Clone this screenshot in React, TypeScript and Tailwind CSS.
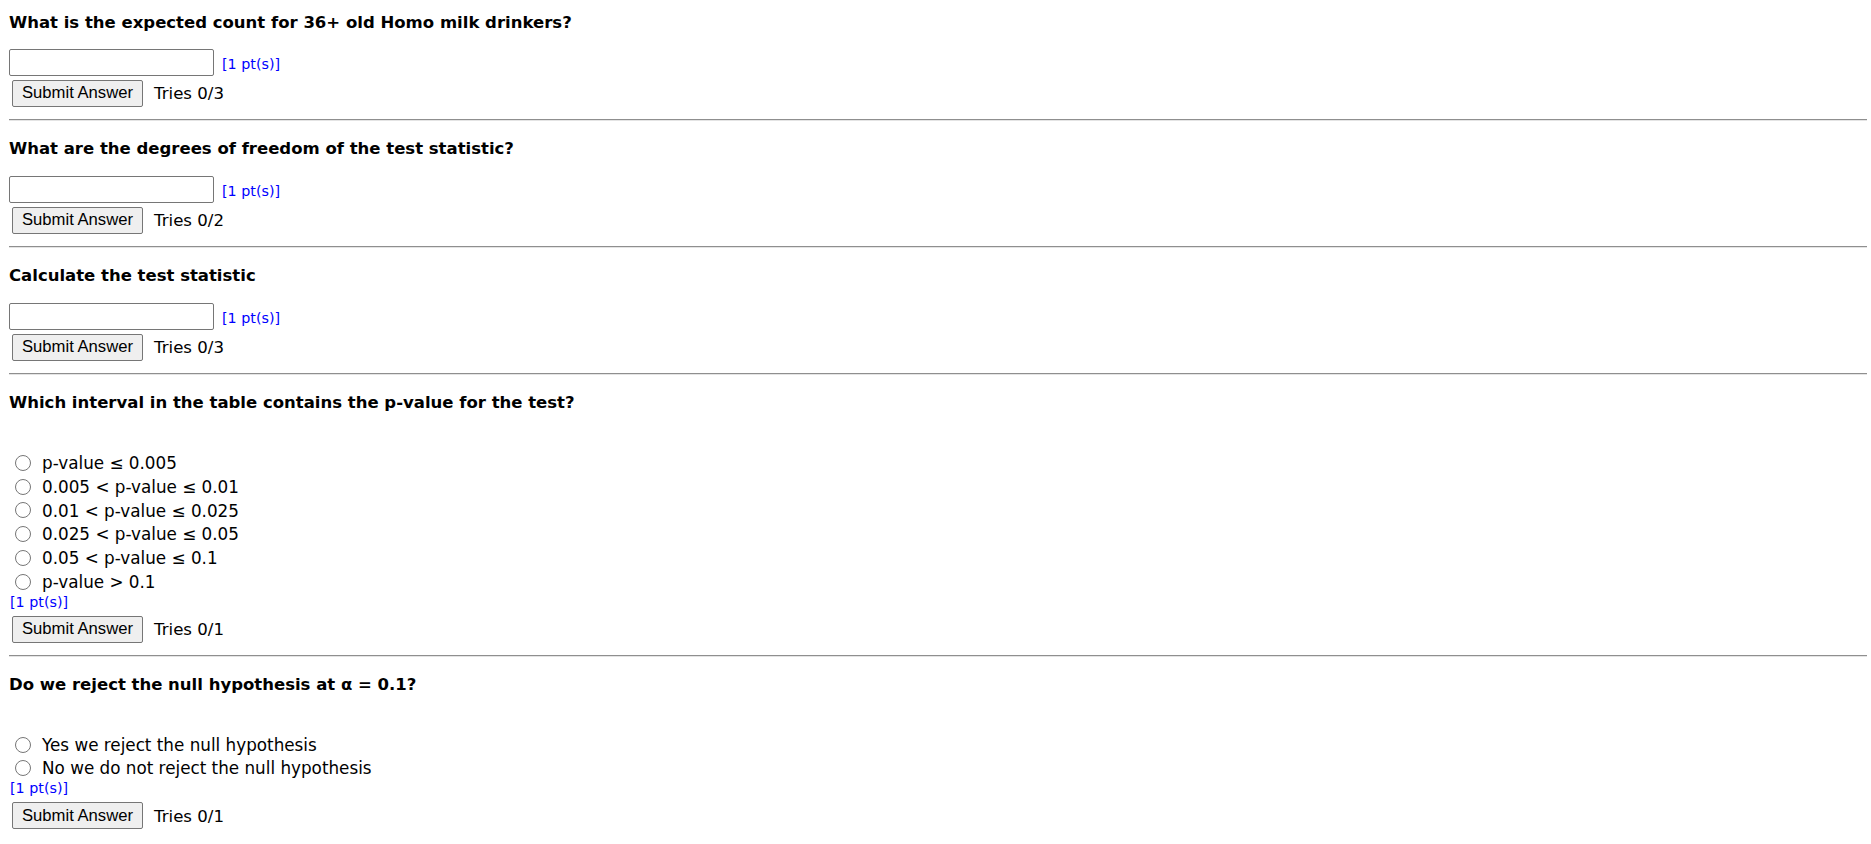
import React from "react";

type Question = {
  title: string;
  tries: string;
  options?: string[];
};

const QUESTIONS: Question[] = [
  { title: "What is the expected count for 36+ old Homo milk drinkers?", tries: "Tries 0/3" },
  { title: "What are the degrees of freedom of the test statistic?", tries: "Tries 0/2" },
  { title: "Calculate the test statistic", tries: "Tries 0/3" },
  {
    title: "Which interval in the table contains the p-value for the test?",
    tries: "Tries 0/1",
    options: [
      "p-value ≤ 0.005",
      "0.005 < p-value ≤ 0.01",
      "0.01 < p-value ≤ 0.025",
      "0.025 < p-value ≤ 0.05",
      "0.05 < p-value ≤ 0.1",
      "p-value > 0.1",
    ],
  },
  {
    title: "Do we reject the null hypothesis at α = 0.1?",
    tries: "Tries 0/1",
    options: ["Yes we reject the null hypothesis", "No we do not reject the null hypothesis"],
  },
];

const verdana = "font-['DejaVu_Sans',Verdana,sans-serif]";
const arial = "font-['Liberation_Sans',Arial,sans-serif]";

function Points() {
  return <span className={`${verdana} text-[14.3px] leading-[16px] text-[#0000ff]`}>[1 pt(s)]</span>;
}

function SubmitRow({ tries }: { tries: string }) {
  return (
    <div className="flex h-[27px] items-center">
      <button
        type="button"
        className={`${arial} ml-[3px] h-[27px] w-[131px] rounded-[2px] border border-[#767676] bg-[#efefef] text-[16.67px] leading-none text-black`}
      >
        Submit Answer
      </button>
      <span className={`${verdana} ml-[11px] mt-[2px] text-[16.6px] leading-none text-black`}>{tries}</span>
    </div>
  );
}

function QuestionBlock({ q, index }: { q: Question; index: number }) {
  const [choice, setChoice] = React.useState<number | null>(null);
  return (
    <div className={index === 0 ? "pt-[13px]" : "pt-[18px]"}>
      <div className={`${verdana} h-[20px] text-[16.5px] font-bold leading-[20px] text-black`}>{q.title}</div>
      {q.options ? (
        <div className="mt-[38px]">
          {q.options.map((opt, i) => (
            <label key={opt} className="flex h-[23.8px] items-center">
              <input
                type="radio"
                name={`q${index}`}
                checked={choice === i}
                onChange={() => setChoice(i)}
                className="ml-[6px] h-[16px] w-[16px] appearance-none rounded-full border border-[#767676] bg-white checked:border-[5px] checked:border-[#0075ff]"
              />
              <span className={`${verdana} ml-[11px] text-[16.8px] leading-[24px] text-black`}>{opt}</span>
            </label>
          ))}
          <div className="flex h-[16px] items-center pl-[1px]">
            <Points />
          </div>
          <div className="mt-[6px]">
            <SubmitRow tries={q.tries} />
          </div>
        </div>
      ) : (
        <div className={index === 0 ? "mt-[16px]" : "mt-[17px]"}>
          <div className="flex h-[27px] items-center">
            <input
              type="text"
              className="h-[27px] w-[205px] rounded-[2px] border border-[#767676] bg-white px-[2px] outline-none"
            />
            <span className="ml-[8px]">
              <Points />
            </span>
          </div>
          <div className="mt-[4px]">
            <SubmitRow tries={q.tries} />
          </div>
        </div>
      )}
      {index < QUESTIONS.length - 1 && (
        <hr className="mt-[12px] h-0 border-t border-b border-t-[#8f8f8f] border-b-[#e4e4e4]" />
      )}
    </div>
  );
}

export default function App() {
  return (
    <div className="min-h-screen bg-white pb-[10px] pl-[9px] pr-[4px]">
      {QUESTIONS.map((q, i) => (
        <QuestionBlock key={q.title} q={q} index={i} />
      ))}
    </div>
  );
}
